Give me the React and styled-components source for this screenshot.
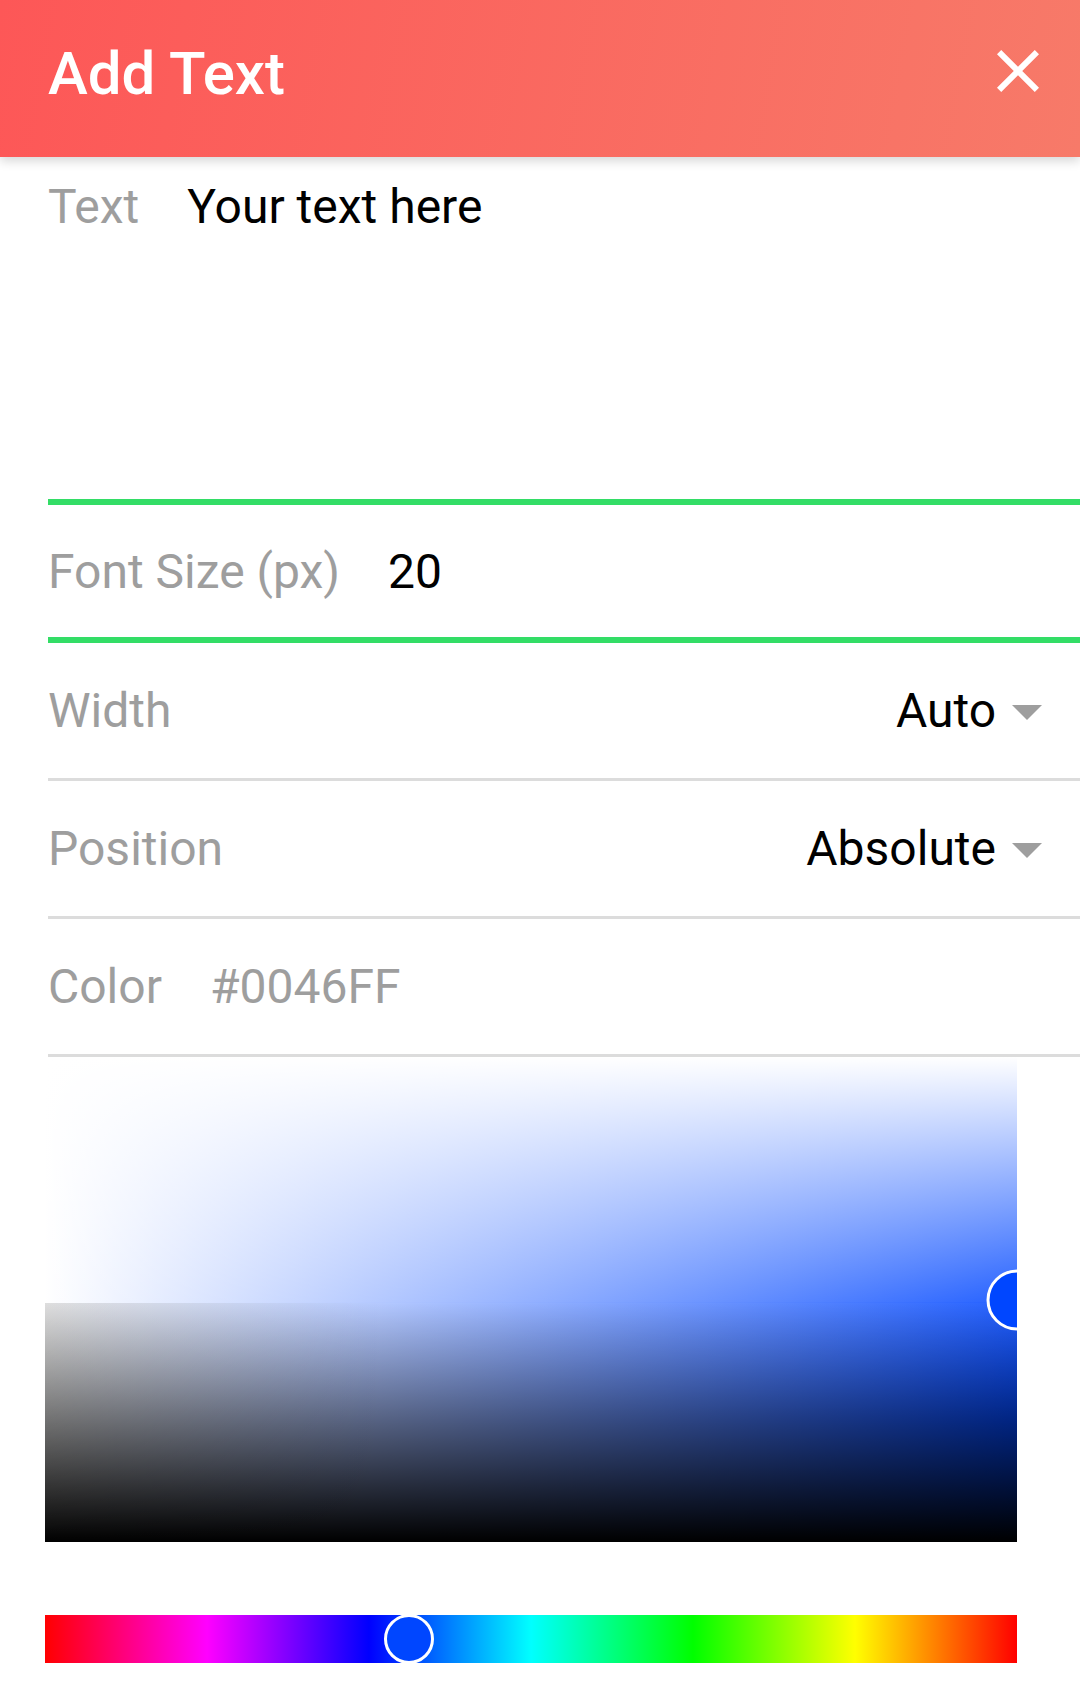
import React from 'react'
import styled, { createGlobalStyle } from 'styled-components'
import { MdClose, MdArrowDropDown } from 'react-icons/md'

const GlobalStyle = createGlobalStyle`
  body {
    margin: 0;
    background: #fff;
    font-family: Roboto, "Noto Sans", sans-serif;
  }
`

const Page = styled.div`
  width: 1080px;
  min-height: 1694px;
  background: #fff;
`

const Header = styled.header`
  position: relative;
  z-index: 1;
  display: flex;
  justify-content: space-between;
  align-items: flex-start;
  box-sizing: border-box;
  height: 157px;
  padding: 38px 26px 0 48px;
  background: linear-gradient(100deg, #fd5757 0%, #f77a69 100%);
  box-shadow: 0 4px 10px rgba(0, 0, 0, 0.16);
`

const Title = styled.h1`
  margin: 0;
  font-size: 60px;
  font-weight: 500;
  line-height: normal;
  color: #fff;
`

const CloseButton = styled.button`
  display: flex;
  width: 72px;
  height: 72px;
  margin-top: -3px;
  padding: 0;
  border: 0;
  background: none;
  color: #fff;

  svg {
    width: 72px;
    height: 72px;
  }
`

const Form = styled.div`
  padding-left: 48px;
`

const Row = styled.div`
  display: flex;
  align-items: ${(p) => (p.$multiline ? 'flex-start' : 'center')};
  gap: 48px;
  box-sizing: border-box;
  height: ${(p) => p.$height}px;
  padding: ${(p) => (p.$multiline ? '21px 17px 0 0' : '0 17px 0 0')};
  border-bottom: ${(p) => (p.$active ? '6px solid #33dd66' : '3px solid #dcdcdc')};
  font-size: 48px;
  line-height: normal;
`

const Label = styled.span`
  color: #9e9e9e;
`

const Value = styled.span`
  color: ${(p) => (p.$muted ? '#9e9e9e' : '#000')};
`

const Select = styled.div`
  display: flex;
  align-items: center;
  margin-left: auto;
  color: #000;

  svg {
    width: 72px;
    height: 72px;
    margin-left: -5px;
    color: #9e9e9e;
  }
`

const Picker = styled.div`
  padding-left: 45px;
`

// upper half fades in from white, lower half slides down to black
const SatValArea = styled.div`
  position: relative;
  overflow: hidden;
  width: 972px;
  height: 485px;
  background:
    linear-gradient(to bottom, #fff 0%, rgba(255, 255, 255, 0.15) 100%) top / 100% 50.7% no-repeat,
    linear-gradient(to right, rgba(0, 0, 0, 0.13) 0%, rgba(0, 0, 0, 0) 35%) bottom / 100% 49.3% no-repeat,
    linear-gradient(to bottom, rgba(0, 0, 0, 0) 0%, #000 100%) bottom / 100% 49.3% no-repeat,
    linear-gradient(to bottom, rgba(255, 255, 255, 0.15) 0%, rgba(255, 255, 255, 0) 50%) bottom / 100% 49.3% no-repeat,
    linear-gradient(to right, #fff 0%, ${(p) => p.$hue} 100%);
`

const HueBar = styled.div`
  position: relative;
  overflow: hidden;
  width: 972px;
  height: 48px;
  margin-top: 73px;
  background: linear-gradient(
    to right,
    #f00 0%,
    #f0f 16.67%,
    #00f 33.33%,
    #0ff 50%,
    #0f0 66.67%,
    #ff0 83.33%,
    #f00 100%
  );
`

const Thumb = styled.span`
  position: absolute;
  box-sizing: border-box;
  width: ${(p) => p.$size}px;
  height: ${(p) => p.$size}px;
  border: 3px solid #fff;
  border-radius: 50%;
  background: ${(p) => p.$color};
  transform: translate(-50%, -50%);
`

const color = '#0046FF'

const App = () => {
  return (
    <Page>
      <GlobalStyle />
      <Header>
        <Title>Add Text</Title>
        <CloseButton aria-label="Close">
          <MdClose />
        </CloseButton>
      </Header>

      <Form>
        <Row $multiline $active $height={348}>
          <Label>Text</Label>
          <Value>Your text here</Value>
        </Row>
        <Row $active $height={138}>
          <Label>Font Size (px)</Label>
          <Value>20</Value>
        </Row>
        <Row $height={138}>
          <Label>Width</Label>
          <Select>
            Auto
            <MdArrowDropDown />
          </Select>
        </Row>
        <Row $height={138}>
          <Label>Position</Label>
          <Select>
            Absolute
            <MdArrowDropDown />
          </Select>
        </Row>
        <Row $height={138}>
          <Label>Color</Label>
          <Value $muted>{color}</Value>
        </Row>
      </Form>

      <Picker>
        <SatValArea $hue={color}>
          <Thumb $size={61} $color={color} style={{ left: '100%', top: '50.1%' }} />
        </SatValArea>
        <HueBar>
          <Thumb $size={50} $color={color} style={{ left: '37.4%', top: '50%' }} />
        </HueBar>
      </Picker>
    </Page>
  )
}

export default App
